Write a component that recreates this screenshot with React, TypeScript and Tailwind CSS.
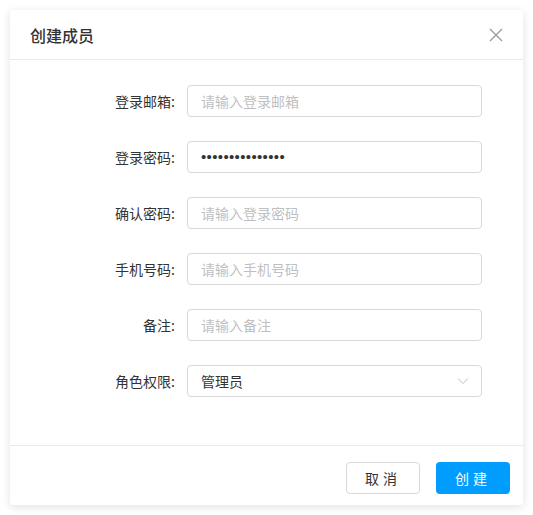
import { useState } from "react";

const font = { fontFamily: '"Noto Sans CJK SC", "Noto Sans", sans-serif' };

const fields = [
  { label: "登录邮箱:", placeholder: "请输入登录邮箱" },
  { label: "登录密码:", password: true },
  { label: "确认密码:", placeholder: "请输入登录密码" },
  { label: "手机号码:", placeholder: "请输入手机号码" },
  { label: "备注:", placeholder: "请输入备注" },
];

function Row({ label, children }: { label: string; children: React.ReactNode }) {
  return (
    <div className="flex items-center">
      <label className="w-[165px] text-right text-[14px] text-[#333]">{label}</label>
      <div className="ml-[12px] w-[295px]">{children}</div>
    </div>
  );
}

export default function App() {
  const [role] = useState("管理员");

  return (
    <div className="min-h-[515px] bg-white p-[10px]" style={font}>
      <div className="w-[513px] bg-white rounded-[3px] shadow-[0_2px_10px_rgba(0,0,0,0.12)]">
        <div className="flex h-[50px] items-center justify-between border-b border-[#eaeaea] px-[20px]">
          <h2 className="text-[16px] font-medium text-[#333]">创建成员</h2>
          <button aria-label="Close" className="text-[#999]">
            <svg width="14" height="14" viewBox="0 0 14 14" fill="none" stroke="currentColor" strokeWidth="1.3">
              <path d="M1 1L13 13M13 1L1 13" />
            </svg>
          </button>
        </div>

        <div className="flex flex-col gap-[24px] pt-[25px] pb-[48px]">
          {fields.map((f) => (
            <Row key={f.label} label={f.label}>
              {f.password ? (
                <div className="flex h-[32px] items-center rounded-[4px] border border-[#d9d9d9] px-[13px] font-['Liberation_Sans',sans-serif] text-[15px] tracking-[0.35px] text-[#333]">
                  •••••••••••••••
                </div>
              ) : (
                <input
                  placeholder={f.placeholder}
                  className="h-[32px] w-full rounded-[4px] border border-[#d9d9d9] px-[13px] text-[14px] text-[#333] outline-none placeholder:text-[#bfbfbf]"
                />
              )}
            </Row>
          ))}
          <Row label="角色权限:">
            <div className="flex h-[32px] items-center justify-between rounded-[4px] border border-[#d9d9d9] pl-[13px] pr-[12px] text-[14px] text-[#333]">
              <span>{role}</span>
              <svg width="12" height="8" viewBox="0 0 12 8" fill="none" stroke="#c0c0c0" strokeWidth="1">
                <path d="M1 1.5L6 6.5L11 1.5" />
              </svg>
            </div>
          </Row>
        </div>

        <div className="flex justify-end gap-[16px] border-t border-[#eaeaea] pt-[16px] pb-[11px] pr-[13px]">
          <button className="h-[32px] w-[74px] rounded-[4px] border border-[#d9d9d9] bg-white text-[14px] tracking-[4px] text-[#333]">
            取消
          </button>
          <button className="h-[32px] w-[74px] rounded-[4px] bg-[#009dff] text-[14px] tracking-[4px] text-white">
            创建
          </button>
        </div>
      </div>
    </div>
  );
}
